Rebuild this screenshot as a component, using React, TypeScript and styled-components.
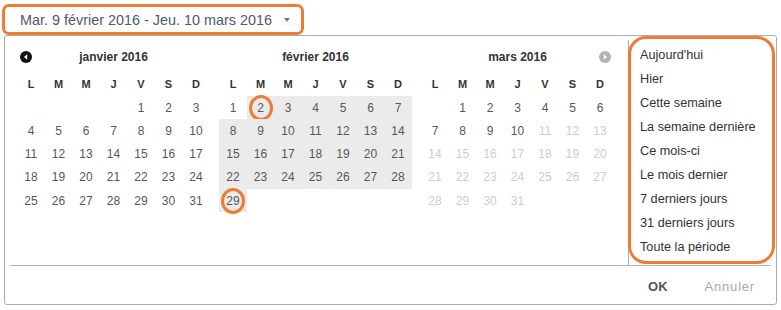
import React from 'react';
import styled, { createGlobalStyle } from 'styled-components';

const ORANGE = '#ee7d31';

const GlobalStyle = createGlobalStyle`
    body {
        margin: 0;
        background: #fff;
        font-family: 'Liberation Sans', Arial, sans-serif;
    }
`;

interface Day {
    n: number | null;
    range?: boolean;
    ring?: boolean;
    off?: boolean;
}

interface Month {
    title: string;
    offset: number;
    length: number;
    nav?: 'prev' | 'next';
    range?: (n: number) => boolean;
    ring?: number[];
    off?: (n: number) => boolean;
}

const months: Month[] = [
    { title: 'janvier 2016', offset: 4, length: 31, nav: 'prev' },
    { title: 'février 2016', offset: 0, length: 29, range: (n) => n >= 2, ring: [2, 29] },
    { title: 'mars 2016', offset: 1, length: 31, nav: 'next', off: (n) => n > 10 },
];

const weekdays = ['L', 'M', 'M', 'J', 'V', 'S', 'D'];

const presets = [
    "Aujourd'hui",
    'Hier',
    'Cette semaine',
    'La semaine dernière',
    'Ce mois-ci',
    'Le mois dernier',
    '7 derniers jours',
    '31 derniers jours',
    'Toute la période',
];

const buildDays = (m: Month): Day[] => {
    const days: Day[] = [];
    for (let i = 0; i < m.offset; i++) days.push({ n: null });
    for (let n = 1; n <= m.length; n++) {
        days.push({
            n,
            range: m.range ? m.range(n) : false,
            ring: m.ring ? m.ring.includes(n) : false,
            off: m.off ? m.off(n) : false,
        });
    }
    return days;
};

const NavArrow: React.FC<{ dir: 'prev' | 'next' }> = ({ dir }) => (
    <svg width="12" height="12" viewBox="0 0 12 12">
        <circle cx="6" cy="6" r="6" fill={dir === 'prev' ? '#111' : '#b3b3b3'} />
        {dir === 'prev'
            ? <path d="M4 6 L7.2 3.3 L7.2 8.7 Z" fill="#fff" />
            : <path d="M8 6 L4.8 3.3 L4.8 8.7 Z" fill="#fff" />}
    </svg>
);

const App: React.FC = () => {
    return (
        <Page>
            <GlobalStyle />
            <DateButton>
                <span>Mar. 9 février 2016 - Jeu. 10 mars 2016</span>
                <Caret />
            </DateButton>
            <Panel>
                <Body>
                    <Calendars>
                        {months.map((m) => (
                            <MonthBox key={m.title}>
                                <MonthHead>
                                    <NavSlot>{m.nav === 'prev' && <NavArrow dir="prev" />}</NavSlot>
                                    <MonthTitle>{m.title}</MonthTitle>
                                    <NavSlot>{m.nav === 'next' && <NavArrow dir="next" />}</NavSlot>
                                </MonthHead>
                                <DayGrid>
                                    {weekdays.map((w, i) => <WeekDay key={i}>{w}</WeekDay>)}
                                    {buildDays(m).map((d, i) => (
                                        <DayCell key={i} range={!!d.range} off={!!d.off}>
                                            {d.ring ? <Ring>{d.n}</Ring> : d.n}
                                        </DayCell>
                                    ))}
                                </DayGrid>
                            </MonthBox>
                        ))}
                    </Calendars>
                    <PresetColumn>
                        <PresetList>
                            {presets.map((p) => <PresetItem key={p}>{p}</PresetItem>)}
                        </PresetList>
                    </PresetColumn>
                </Body>
                <Footer>
                    <FooterButton primary>OK</FooterButton>
                    <FooterButton>Annuler</FooterButton>
                </Footer>
            </Panel>
        </Page>
    );
};

const Page = styled.div`
    padding: 4px 0 0 2px;
    width: 781px;
    height: 310px;
    box-sizing: border-box;
`;

const DateButton = styled.div`
    display: inline-flex;
    align-items: center;
    gap: 12px;
    box-sizing: border-box;
    height: 31px;
    padding: 0 11px 0 15px;
    border: 3px solid ${ORANGE};
    border-radius: 7px;
    font-size: 14.4px;
    color: #4d5b6c;
    white-space: nowrap;
`;

const Caret = styled.span`
    width: 0;
    height: 0;
    border-left: 3.5px solid transparent;
    border-right: 3.5px solid transparent;
    border-top: 4px solid #7a7a7a;
    margin-top: 1px;
`;

const Panel = styled.div`
    margin-left: 2px;
    width: 773px;
    height: 270px;
    box-sizing: border-box;
    border: 1px solid #adadad;
    border-radius: 3px;
    display: flex;
    flex-direction: column;
`;

const Body = styled.div`
    display: flex;
    height: 229px;
    padding-top: 4px;
    box-sizing: border-box;
`;

const Calendars = styled.div`
    flex: 1;
    display: flex;
    gap: 9.5px;
    padding: 7px 0 0 12.25px;
`;

const MonthBox = styled.div`
    width: 192.5px;
`;

const MonthHead = styled.div`
    display: flex;
    align-items: center;
    height: 20px;
    padding: 0 3px;
    margin-bottom: 5.7px;
`;

const NavSlot = styled.div`
    width: 12px;
    height: 12px;
    display: flex;
`;

const MonthTitle = styled.div`
    flex: 1;
    text-align: center;
    font-size: 12px;
    font-weight: bold;
    color: #333;
`;

const DayGrid = styled.div`
    display: grid;
    grid-template-columns: repeat(7, 27.5px);
    grid-auto-rows: 23.25px;
`;

const WeekDay = styled.div`
    display: flex;
    align-items: center;
    justify-content: center;
    font-size: 11px;
    font-weight: bold;
    color: #333;
`;

const DayCell = styled.div<{ range: boolean; off: boolean }>`
    display: flex;
    align-items: center;
    justify-content: center;
    font-size: 12px;
    color: ${({ off }) => (off ? '#cdcdcd' : '#585858')};
    background: ${({ range }) => (range ? '#ebebeb' : 'transparent')};
`;

const Ring = styled.span`
    flex: none;
    display: flex;
    align-items: center;
    justify-content: center;
    width: 18px;
    height: 20px;
    border: 3px solid ${ORANGE};
    border-radius: 50%;
`;

const PresetColumn = styled.div`
    width: 148px;
    flex: none;
    border-left: 1px solid #adadad;
    box-sizing: border-box;
`;

const PresetList = styled.div`
    margin: -4px 0 0 -1px;
    width: 147px;
    height: 228px;
    box-sizing: border-box;
    border: 3px solid ${ORANGE};
    border-radius: 18px;
    padding: 4px 0 0 9px;
`;

const PresetItem = styled.div`
    height: 24px;
    line-height: 24px;
    font-size: 12.7px;
    color: #333;
    white-space: nowrap;
`;

const Footer = styled.div`
    margin: 0 5px;
    border-top: 1px solid #b4b4b4;
    flex: 1;
    display: flex;
    justify-content: flex-end;
    align-items: center;
    gap: 37px;
    padding: 3px 16px 0 0;
`;

const FooterButton = styled.div<{ primary?: boolean }>`
    font-size: 13px;
    font-weight: ${({ primary }) => (primary ? 'bold' : 'normal')};
    color: ${({ primary }) => (primary ? '#555' : '#a8a8a8')};
    letter-spacing: ${({ primary }) => (primary ? '0' : '0.8px')};
`;

export default App;
